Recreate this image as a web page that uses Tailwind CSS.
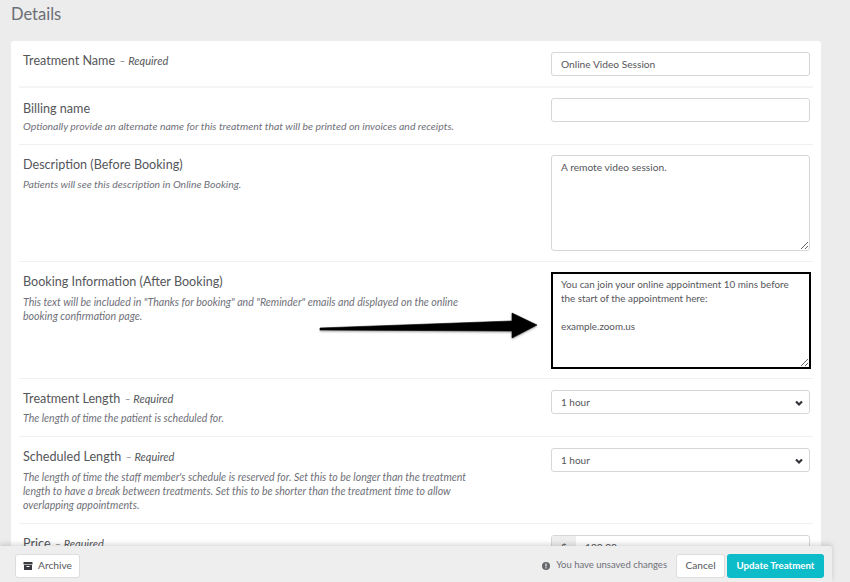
<!DOCTYPE html>
<html lang="en">
<head>
    <meta charset="UTF-8">
    <title>Treatment Details</title>
    <script src="https://cdn.jsdelivr.net/npm/@tailwindcss/browser@4"></script>
</head>
<body class="relative h-[582px] w-[850px] overflow-hidden bg-[#ececec] font-['Lato','Open_Sans',sans-serif] text-[#55565a]">

    <!-- Heading -->
    <h1 class="pl-[11px] pt-[3px] h-[41px] text-[16.5px] leading-[22px] text-[#6b6e75]">Details</h1>

    <!-- Card -->
    <div class="ml-[11px] w-[810px] rounded-[3px] bg-white px-[8px]">

        <div class="flex h-[47px] border-b-2 border-[#f5f5f5]">
            <div class="w-[532px] pl-[4px] pt-[11px]">
                <p class="text-[12.6px] leading-[17px]">Treatment Name <span class="ml-[1px] text-[11px] italic">– Required</span></p>
            </div>
            <div class="pt-[11px]">
                <input value="Online Video Session" class="block h-[24px] w-[259px] rounded-[3px] border border-[#d6d6d6] px-[9px] pb-[1px] text-[10.2px] text-[#55565a]">
            </div>
        </div>

        <div class="flex h-[57px] border-b border-[#f0f0f0]">
            <div class="w-[532px] pl-[4px] pt-[12px]">
                <p class="text-[12.6px] leading-[17px]">Billing name</p>
                <p class="mt-[2px] text-[10.45px] leading-[14px] italic text-[#6f7079]">Optionally provide an alternate name for this treatment that will be printed on invoices and receipts.</p>
            </div>
            <div class="pt-[10px]">
                <input class="block h-[24px] w-[259px] rounded-[3px] border border-[#d6d6d6] px-[9px] text-[10.2px]">
            </div>
        </div>

        <div class="flex h-[117px] border-b border-[#f0f0f0]">
            <div class="w-[532px] pl-[4px] pt-[11px]">
                <p class="text-[12.6px] leading-[17px]">Description (Before Booking)</p>
                <p class="mt-[4px] text-[10.45px] leading-[14px] italic text-[#6f7079]">Patients will see this description in Online Booking.</p>
            </div>
            <div class="pt-[10px]">
                <textarea class="block h-[96px] w-[259px] rounded-[3px] border border-[#d6d6d6] px-[9px] py-[4px] text-[10.2px] leading-[14px] text-[#55565a]">A remote video session.</textarea>
            </div>
        </div>

        <div class="flex h-[117px] border-b border-[#f0f0f0]">
            <div class="w-[532px] pl-[4px] pt-[11px]">
                <p class="text-[12.6px] leading-[17px]">Booking Information (After Booking)</p>
                <p class="mt-[5px] w-[450px] text-[10.6px] leading-[14px] italic text-[#6f7079]">This text will be included in "Thanks for booking" and "Reminder" emails and displayed on the online booking confirmation page.</p>
            </div>
            <div class="pt-[10px]">
                <textarea class="block h-[97px] w-[260px] border-2 border-black px-[8px] py-[3px] text-[9.85px] leading-[14px] text-[#55565a]">You can join your online appointment 10 mins before the start of the appointment here:

example.zoom.us</textarea>
            </div>
        </div>

        <div class="flex h-[58px] border-b border-[#f0f0f0]">
            <div class="w-[532px] pl-[4px] pt-[11px]">
                <p class="text-[12.6px] leading-[17px]">Treatment Length <span class="ml-[1px] text-[11px] italic">– Required</span></p>
                <p class="mt-[4px] text-[10.5px] leading-[14px] italic text-[#6f7079]">The length of time the patient is scheduled for.</p>
            </div>
            <div class="pt-[11px]">
                <div class="flex h-[24px] w-[259px] items-center justify-between rounded-[3px] border border-[#d6d6d6] pl-[9px] pr-[6px] pt-[1px] text-[10px]">
                    <span>1 hour</span>
                    <svg class="h-[8px] w-[8px]" viewBox="0 0 8 8" fill="none" stroke="#33343a" stroke-width="2.2"><path d="M1 2.5 L4 5.5 L7 2.5"/></svg>
                </div>
            </div>
        </div>

        <div class="flex h-[87px] border-b border-[#f0f0f0]">
            <div class="w-[532px] pl-[4px] pt-[11px]">
                <p class="text-[12.6px] leading-[17px]">Scheduled Length <span class="ml-[1px] text-[11px] italic">– Required</span></p>
                <p class="mt-[5px] w-[450px] text-[10.55px] leading-[14px] italic text-[#6f7079]">The length of time the staff member's schedule is reserved for. Set this to be longer than the treatment length to have a break between treatments. Set this to be shorter than the treatment time to allow overlapping appointments.</p>
            </div>
            <div class="pt-[11px]">
                <div class="flex h-[24px] w-[259px] items-center justify-between rounded-[3px] border border-[#d6d6d6] pl-[9px] pr-[6px] pt-[1px] text-[10px]">
                    <span>1 hour</span>
                    <svg class="h-[8px] w-[8px]" viewBox="0 0 8 8" fill="none" stroke="#33343a" stroke-width="2.2"><path d="M1 2.5 L4 5.5 L7 2.5"/></svg>
                </div>
            </div>
        </div>

        <div class="flex h-[60px]">
            <div class="w-[532px] pl-[4px] pt-[11px]">
                <p class="text-[12.6px] leading-[17px]">Price <span class="ml-[1px] text-[11px] italic">– Required</span></p>
            </div>
            <div class="pt-[11px]">
                <div class="flex h-[24px] w-[259px] rounded-[3px] border border-[#d6d6d6] text-[10.2px]">
                    <span class="w-[24px] bg-[#eeeeee] text-center leading-[22px]">$</span>
                    <span class="pl-[9px] leading-[22px]">100.00</span>
                </div>
            </div>
        </div>
    </div>

    <!-- Annotation arrow drawn over the form -->
    <svg class="absolute left-[315px] top-[305px] h-[45px] w-[230px] drop-shadow-[0_1px_1px_rgba(0,0,0,0.4)]" viewBox="0 0 230 45">
        <path d="M5 23 L197 16 L197 8 L222 20 L197 33 L197 26 L5 25 Z" fill="#000" stroke="#000" stroke-width="0.6" stroke-linejoin="round"/>
    </svg>

    <!-- Sticky footer -->
    <div class="absolute bottom-0 left-0 flex h-[36px] w-[832px] items-center justify-between rounded-tr-[3px] bg-[#eeeeee] pl-[15px] pr-[8px] pt-[3px] shadow-[0_-2px_5px_rgba(0,0,0,0.15)]">
        <button class="flex h-[24px] w-[65px] items-center justify-center gap-[5px] rounded-[3px] border border-[#dddddd] bg-white text-[10.2px]">
            <svg class="h-[10px] w-[10px]" viewBox="0 0 10 10" fill="#3a3b40"><rect x="0.5" y="1" width="9" height="2.4"/><path d="M1 4h8v5H1z M3.5 5v1h3V5z" fill-rule="evenodd"/></svg>
            Archive
        </button>
        <div class="flex items-center">
            <svg class="h-[8px] w-[8px]" viewBox="0 0 8 8"><circle cx="4" cy="4" r="4" fill="#66676c"/><rect x="3.4" y="1.5" width="1.2" height="3" fill="#eee"/><rect x="3.4" y="5.2" width="1.2" height="1.2" fill="#eee"/></svg>
            <span class="ml-[6px] text-[9.5px] text-[#6f7079]">You have unsaved changes</span>
            <button class="ml-[9px] h-[24px] w-[49px] rounded-[3px] border border-[#dddddd] bg-white text-[10.2px]">Cancel</button>
            <button class="ml-[2px] h-[24px] w-[97px] rounded-[3px] bg-[#0cbcc8] text-[9.7px] font-bold text-white">Update Treatment</button>
        </div>
    </div>

</body>
</html>
